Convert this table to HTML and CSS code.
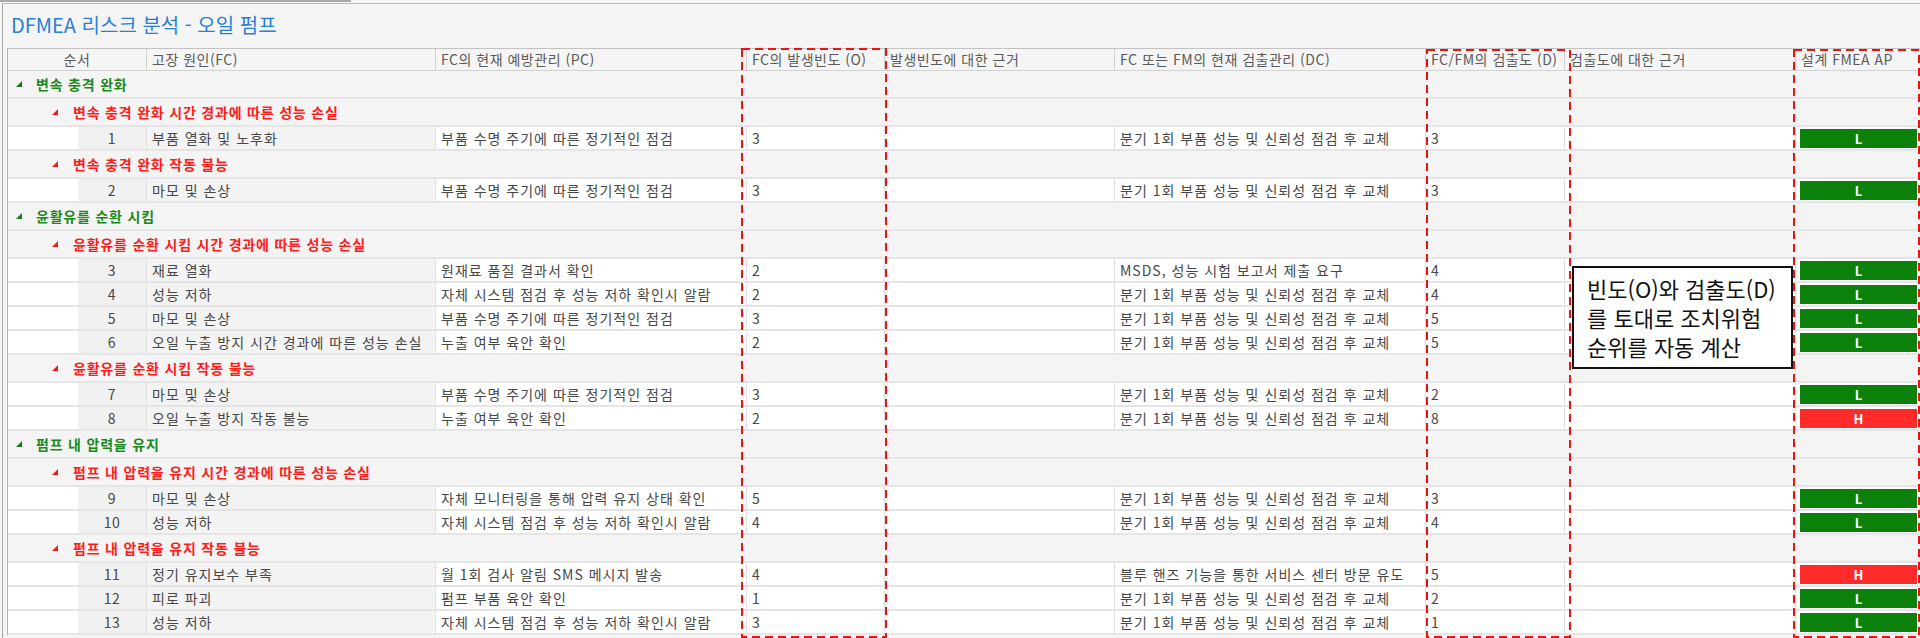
FILE: index.html
```html
<!DOCTYPE html>
<html lang="ko">
<head>
<meta charset="utf-8">
<title>DFMEA 리스크 분석 - 오일 펌프</title>
<link rel="stylesheet" href="styles.css">
</head>
<body>
<div class="topstrip"></div>
<div class="shell">
  <div class="title">DFMEA 리스크 분석 - 오일 펌프</div>
  <div class="table">
    <div class="row head">
      <div class="h center">순서</div>
      <div class="h">고장 원인(FC)</div>
      <div class="h">FC의 현재 예방관리 (PC)</div>
      <div class="h">FC의 발생빈도 (O)</div>
      <div class="h">발생빈도에 대한 근거</div>
      <div class="h">FC 또는 FM의 현재 검출관리 (DC)</div>
      <div class="h">FC/FM의 검출도 (D)</div>
      <div class="h">검출도에 대한 근거</div>
      <div class="h last">설계 FMEA AP</div>
    </div>

    <div class="grp lvl1"><svg class="tri" width="6" height="6" viewBox="0 0 6 6"><polygon points="6,0 6,6 0,6"/></svg><span>변속 충격 완화</span></div>
    <div class="grp lvl2"><svg class="tri" width="6" height="6" viewBox="0 0 6 6"><polygon points="6,0 6,6 0,6"/></svg><span>변속 충격 완화 시간 경과에 따른 성능 손실</span></div>
    <div class="row data">
      <div class="c seq"><span class="num">1</span></div>
      <div class="c ro">부품 열화 및 노후화</div>
      <div class="c">부품 수명 주기에 따른 정기적인 점검</div>
      <div class="c">3</div>
      <div class="c"></div>
      <div class="c">분기 1회 부품 성능 및 신뢰성 점검 후 교체</div>
      <div class="c">3</div>
      <div class="c"></div>
      <div class="c ap"><span class="badge low">L</span></div>
    </div>
    <div class="grp lvl2"><svg class="tri" width="6" height="6" viewBox="0 0 6 6"><polygon points="6,0 6,6 0,6"/></svg><span>변속 충격 완화 작동 불능</span></div>
    <div class="row data">
      <div class="c seq"><span class="num">2</span></div>
      <div class="c ro">마모 및 손상</div>
      <div class="c">부품 수명 주기에 따른 정기적인 점검</div>
      <div class="c">3</div>
      <div class="c"></div>
      <div class="c">분기 1회 부품 성능 및 신뢰성 점검 후 교체</div>
      <div class="c">3</div>
      <div class="c"></div>
      <div class="c ap"><span class="badge low">L</span></div>
    </div>

    <div class="grp lvl1"><svg class="tri" width="6" height="6" viewBox="0 0 6 6"><polygon points="6,0 6,6 0,6"/></svg><span>윤활유를 순환 시킴</span></div>
    <div class="grp lvl2"><svg class="tri" width="6" height="6" viewBox="0 0 6 6"><polygon points="6,0 6,6 0,6"/></svg><span>윤활유를 순환 시킴 시간 경과에 따른 성능 손실</span></div>
    <div class="row data">
      <div class="c seq"><span class="num">3</span></div>
      <div class="c ro">재료 열화</div>
      <div class="c">원재료 품질 결과서 확인</div>
      <div class="c">2</div>
      <div class="c"></div>
      <div class="c">MSDS, 성능 시험 보고서 제출 요구</div>
      <div class="c">4</div>
      <div class="c"></div>
      <div class="c ap"><span class="badge low">L</span></div>
    </div>
    <div class="row data">
      <div class="c seq"><span class="num">4</span></div>
      <div class="c ro">성능 저하</div>
      <div class="c">자체 시스템 점검 후 성능 저하 확인시 알람</div>
      <div class="c">2</div>
      <div class="c"></div>
      <div class="c">분기 1회 부품 성능 및 신뢰성 점검 후 교체</div>
      <div class="c">4</div>
      <div class="c"></div>
      <div class="c ap"><span class="badge low">L</span></div>
    </div>
    <div class="row data">
      <div class="c seq"><span class="num">5</span></div>
      <div class="c ro">마모 및 손상</div>
      <div class="c">부품 수명 주기에 따른 정기적인 점검</div>
      <div class="c">3</div>
      <div class="c"></div>
      <div class="c">분기 1회 부품 성능 및 신뢰성 점검 후 교체</div>
      <div class="c">5</div>
      <div class="c"></div>
      <div class="c ap"><span class="badge low">L</span></div>
    </div>
    <div class="row data">
      <div class="c seq"><span class="num">6</span></div>
      <div class="c ro">오일 누출 방지 시간 경과에 따른 성능 손실</div>
      <div class="c">누출 여부 육안 확인</div>
      <div class="c">2</div>
      <div class="c"></div>
      <div class="c">분기 1회 부품 성능 및 신뢰성 점검 후 교체</div>
      <div class="c">5</div>
      <div class="c"></div>
      <div class="c ap"><span class="badge low">L</span></div>
    </div>
    <div class="grp lvl2"><svg class="tri" width="6" height="6" viewBox="0 0 6 6"><polygon points="6,0 6,6 0,6"/></svg><span>윤활유를 순환 시킴 작동 불능</span></div>
    <div class="row data">
      <div class="c seq"><span class="num">7</span></div>
      <div class="c ro">마모 및 손상</div>
      <div class="c">부품 수명 주기에 따른 정기적인 점검</div>
      <div class="c">3</div>
      <div class="c"></div>
      <div class="c">분기 1회 부품 성능 및 신뢰성 점검 후 교체</div>
      <div class="c">2</div>
      <div class="c"></div>
      <div class="c ap"><span class="badge low">L</span></div>
    </div>
    <div class="row data">
      <div class="c seq"><span class="num">8</span></div>
      <div class="c ro">오일 누출 방지 작동 불능</div>
      <div class="c">누출 여부 육안 확인</div>
      <div class="c">2</div>
      <div class="c"></div>
      <div class="c">분기 1회 부품 성능 및 신뢰성 점검 후 교체</div>
      <div class="c">8</div>
      <div class="c"></div>
      <div class="c ap"><span class="badge high">H</span></div>
    </div>

    <div class="grp lvl1"><svg class="tri" width="6" height="6" viewBox="0 0 6 6"><polygon points="6,0 6,6 0,6"/></svg><span>펌프 내 압력을 유지</span></div>
    <div class="grp lvl2"><svg class="tri" width="6" height="6" viewBox="0 0 6 6"><polygon points="6,0 6,6 0,6"/></svg><span>펌프 내 압력을 유지 시간 경과에 따른 성능 손실</span></div>
    <div class="row data">
      <div class="c seq"><span class="num">9</span></div>
      <div class="c ro">마모 및 손상</div>
      <div class="c">자체 모니터링을 통해 압력 유지 상태 확인</div>
      <div class="c">5</div>
      <div class="c"></div>
      <div class="c">분기 1회 부품 성능 및 신뢰성 점검 후 교체</div>
      <div class="c">3</div>
      <div class="c"></div>
      <div class="c ap"><span class="badge low">L</span></div>
    </div>
    <div class="row data">
      <div class="c seq"><span class="num">10</span></div>
      <div class="c ro">성능 저하</div>
      <div class="c">자체 시스템 점검 후 성능 저하 확인시 알람</div>
      <div class="c">4</div>
      <div class="c"></div>
      <div class="c">분기 1회 부품 성능 및 신뢰성 점검 후 교체</div>
      <div class="c">4</div>
      <div class="c"></div>
      <div class="c ap"><span class="badge low">L</span></div>
    </div>
    <div class="grp lvl2"><svg class="tri" width="6" height="6" viewBox="0 0 6 6"><polygon points="6,0 6,6 0,6"/></svg><span>펌프 내 압력을 유지 작동 불능</span></div>
    <div class="row data">
      <div class="c seq"><span class="num">11</span></div>
      <div class="c ro">정기 유지보수 부족</div>
      <div class="c">월 1회 검사 알림 SMS 메시지 발송</div>
      <div class="c">4</div>
      <div class="c"></div>
      <div class="c">블루 핸즈 기능을 통한 서비스 센터 방문 유도</div>
      <div class="c">5</div>
      <div class="c"></div>
      <div class="c ap"><span class="badge high">H</span></div>
    </div>
    <div class="row data">
      <div class="c seq"><span class="num">12</span></div>
      <div class="c ro">피로 파괴</div>
      <div class="c">펌프 부품 육안 확인</div>
      <div class="c">1</div>
      <div class="c"></div>
      <div class="c">분기 1회 부품 성능 및 신뢰성 점검 후 교체</div>
      <div class="c">2</div>
      <div class="c"></div>
      <div class="c ap"><span class="badge low">L</span></div>
    </div>
    <div class="row data">
      <div class="c seq"><span class="num">13</span></div>
      <div class="c ro">성능 저하</div>
      <div class="c">자체 시스템 점검 후 성능 저하 확인시 알람</div>
      <div class="c">3</div>
      <div class="c"></div>
      <div class="c">분기 1회 부품 성능 및 신뢰성 점검 후 교체</div>
      <div class="c">1</div>
      <div class="c"></div>
      <div class="c ap"><span class="badge low">L</span></div>
    </div>

    <svg class="mark mark-o" width="146" height="590" viewBox="0 0 146 590"><rect x="1" y="1" width="144" height="588"/></svg>
    <svg class="mark mark-d" width="145" height="589" viewBox="0 0 145 589"><rect x="1" y="1" width="143" height="587"/></svg>
    <svg class="mark mark-ap" width="127" height="589" viewBox="0 0 127 589"><rect x="1" y="1" width="125" height="587"/></svg>

    <div class="callout">빈도(O)와 검출도(D)<br>를 토대로 조치위험<br>순위를 자동 계산</div>
  </div>
</div>
</body>
</html>
```

FILE: styles.css
```css
html, body {
  margin: 0;
  padding: 0;
}
body {
  width: 1920px;
  height: 638px;
  overflow: hidden;
  background: #f4f4f4;
  font-family: "Noto Sans CJK KR", "Noto Sans", sans-serif;
  font-size: 14px;
  color: #474747;
}
.topstrip {
  width: 351px;
  height: 2px;
  background: #a9a9a9;
}
.shell {
  margin-top: 1px;
  margin-left: 2px;
  border-top: 1px solid #b9b9b9;
  border-left: 1px solid #a9a9a9;
  padding-left: 4px;
  height: 640px;
}
.title {
  height: 44px;
  box-sizing: border-box;
  padding: 8px 0 0 4px;
  font-size: 20px;
  line-height: 26px;
  color: #2a7fd4;
}
.table {
  position: relative;
  border-left: 1px solid #b4b4b4;
}
.row {
  display: grid;
  grid-template-columns: 139px 289px 311px 138px 230px 311px 139px 231px 124px;
}
.head {
  height: 23px;
  box-sizing: border-box;
  border-top: 1px solid #c2c2c2;
  border-bottom: 1px solid #d2d2d2;
  background: #f5f5f5;
  color: #5a5a5a;
  letter-spacing: 0.5px;
}
.h {
  border-right: 1px solid #d0d0d0;
  padding-left: 5px;
  line-height: 21px;
  white-space: nowrap;
  overflow: hidden;
}
.h.center {
  text-align: center;
  padding-left: 0;
}
.h.last {
  border-right: none;
}
.grp {
  height: 28px;
  box-sizing: border-box;
  border-bottom: 2px solid #e5e5e5;
  background: #f4f4f4;
  display: flex;
  align-items: center;
  font-weight: bold;
  white-space: nowrap;
  letter-spacing: 0.8px;
}
.grp .tri {
  flex: none;
}
.lvl1 {
  padding-left: 8px;
  color: #1b8a1b;
}
.lvl1 .tri {
  fill: #167a16;
  margin-right: 14px;
}
.lvl2 {
  padding-left: 44px;
  color: #ff1c1c;
}
.lvl2 .tri {
  fill: #f01a1a;
  margin-right: 15px;
}
.data {
  height: 24px;
  box-sizing: border-box;
  border-bottom: 2px solid #e5e5e5;
  letter-spacing: 1px;
}
.c {
  background: #ffffff;
  border-right: 1px solid #e0e0e0;
  padding-left: 5px;
  line-height: 22px;
  white-space: nowrap;
  overflow: hidden;
}
.c.seq {
  padding-left: 70px;
}
.num {
  display: block;
  height: 100%;
  background: #f1f1f1;
  text-align: center;
  letter-spacing: 0.5px;
}
.c.ro {
  background: #f3f3f3;
}
.c.ap {
  border-right: none;
  padding: 2px 3px 1px 4px;
}
.badge {
  display: block;
  height: 19px;
  line-height: 19px;
  text-align: center;
  color: #ffffff;
  font-weight: bold;
  font-size: 13px;
  letter-spacing: 0;
}
.badge.low {
  background: #0b800b;
}
.badge.high {
  background: #ff2a2a;
}
.mark {
  position: absolute;
  top: 0;
  fill: none;
  stroke: #ee1111;
  stroke-width: 2;
  stroke-dasharray: 8 5;
  pointer-events: none;
}
.mark-o {
  left: 733px;
}
.mark-d {
  left: 1418px;
  top: 1px;
}
.mark-ap {
  left: 1785px;
  top: 1px;
}
.callout {
  position: absolute;
  left: 1564px;
  top: 218px;
  width: 221px;
  height: 103px;
  box-sizing: border-box;
  border: 2px solid #111111;
  background: #ffffff;
  padding: 6px 0 0 13px;
  font-size: 22px;
  line-height: 29px;
  color: #111111;
  white-space: nowrap;
}
```
